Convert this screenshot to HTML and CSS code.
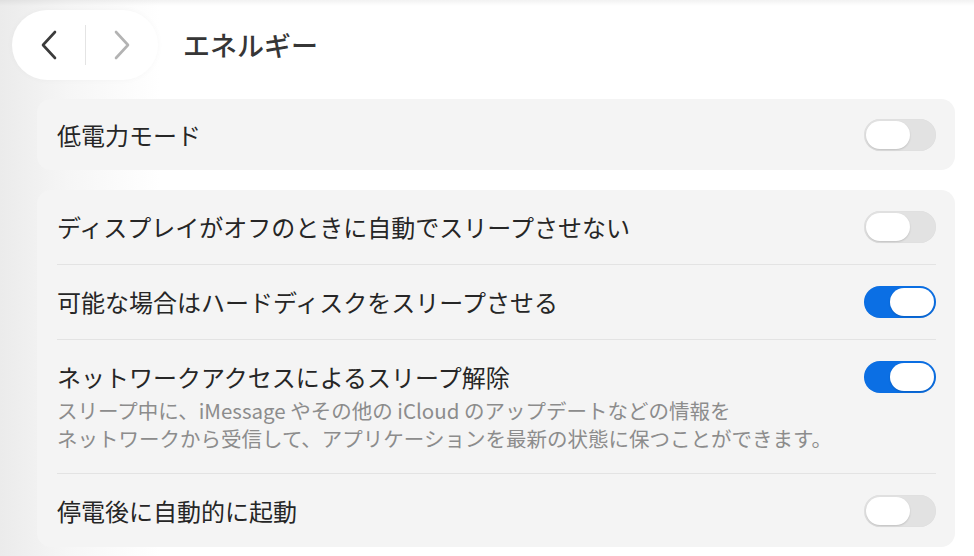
FILE: index.html
```html
<!DOCTYPE html>
<html lang="ja">
<head>
<meta charset="utf-8">
<link rel="stylesheet" href="styles.css">
</head>
<body>
<header class="toolbar">
  <div class="nav-pill">
    <button class="nav-btn back" aria-label="戻る">
      <svg width="18" height="30" viewBox="0 0 18 30"><path d="M15 2 L3 15 L15 28" fill="none" stroke="#3b3b3b" stroke-width="2.6" stroke-linecap="round" stroke-linejoin="round"/></svg>
    </button>
    <span class="nav-divider"></span>
    <button class="nav-btn fwd" aria-label="進む">
      <svg width="18" height="30" viewBox="0 0 18 30"><path d="M3 2 L15 15 L3 28" fill="none" stroke="#b3b3b3" stroke-width="2.6" stroke-linecap="round" stroke-linejoin="round"/></svg>
    </button>
  </div>
  <h1 class="title">エネルギー</h1>
</header>
<main class="content">
  <section class="card card-single">
    <div class="row row-single">
      <div class="label">低電力モード</div>
      <span class="toggle"><span class="knob"></span></span>
    </div>
  </section>
  <section class="card">
    <div class="row">
      <div class="label">ディスプレイがオフのときに自動でスリープさせない</div>
      <span class="toggle"><span class="knob"></span></span>
    </div>
    <div class="row">
      <div class="label">可能な場合はハードディスクをスリープさせる</div>
      <span class="toggle on"><span class="knob"></span></span>
    </div>
    <div class="row">
      <div class="text">
        <div class="label">ネットワークアクセスによるスリープ解除</div>
        <p class="desc">スリープ中に、iMessage やその他の iCloud のアップデートなどの情報を<br>ネットワークから受信して、アプリケーションを最新の状態に保つことができます。</p>
      </div>
      <span class="toggle on"><span class="knob"></span></span>
    </div>
    <div class="row row-last">
      <div class="label">停電後に自動的に起動</div>
      <span class="toggle"><span class="knob"></span></span>
    </div>
  </section>
</main>
</body>
</html>
```
FILE: styles.css
```css
* { box-sizing: border-box; }
html, body { margin: 0; padding: 0; }
body {
  width: 974px;
  height: 556px;
  overflow: hidden;
  font-family: "Noto Sans CJK JP", "Noto Sans", sans-serif;
  color: #262626;
  background:
    linear-gradient(to bottom, rgba(0,0,0,0.05) 0, rgba(0,0,0,0) 6px),
    linear-gradient(to right, #ebebeb 0, #f6f6f6 70px, #ffffff 160px);
}
.toolbar {
  display: flex;
  align-items: center;
  padding: 10px 0 0 12px;
  height: 80px;
}
.nav-pill {
  display: flex;
  align-items: center;
  width: 146px;
  height: 70px;
  border-radius: 35px;
  background: #ffffff;
  box-shadow: 0 0 6px rgba(0,0,0,0.03);
  padding: 0 0 0 24px;
}
.nav-btn {
  border: 0;
  background: none;
  padding: 0;
  width: 26px;
  height: 30px;
  display: flex;
  align-items: center;
  justify-content: center;
}
.nav-divider {
  width: 1px;
  height: 40px;
  background: #e4e4e4;
  margin: 0 23px 0 23px;
}
.title {
  margin: 0 0 0 25px;
  font-size: 27px;
  font-weight: 500;
  color: #363636;
  line-height: 32px;
}
.content {
  padding: 19px 19px 0 37px;
  display: flex;
  flex-direction: column;
  gap: 20px;
}
.card {
  background: #f4f4f4;
  border-radius: 14px;
  padding: 0 19px 0 20px;
}
.row {
  display: flex;
  align-items: flex-start;
  justify-content: space-between;
  padding: 21px 0 21px;
}
.row + .row { border-top: 1px solid #e3e3e3; }
.row-single { padding: 20px 0 19px; }
.row-last { padding: 21px 0 20px; }
.label {
  font-size: 24px;
  line-height: 32px;
  color: #262626;
}
.desc {
  margin: 3px 0 0;
  font-size: 20.5px;
  line-height: 28px;
  color: #8c8c8c;
}
.toggle {
  flex: none;
  width: 72px;
  height: 32px;
  border-radius: 16px;
  background: #e2e2e2;
  padding: 2px;
  display: flex;
  justify-content: flex-start;
  box-shadow: inset 0 0 1px rgba(0,0,0,0.08);
}
.toggle.on {
  background: #0b6fe4;
  justify-content: flex-end;
}
.knob {
  width: 44px;
  height: 28px;
  border-radius: 14px;
  background: #ffffff;
  box-shadow: 0 1px 2px rgba(0,0,0,0.15);
}
```
